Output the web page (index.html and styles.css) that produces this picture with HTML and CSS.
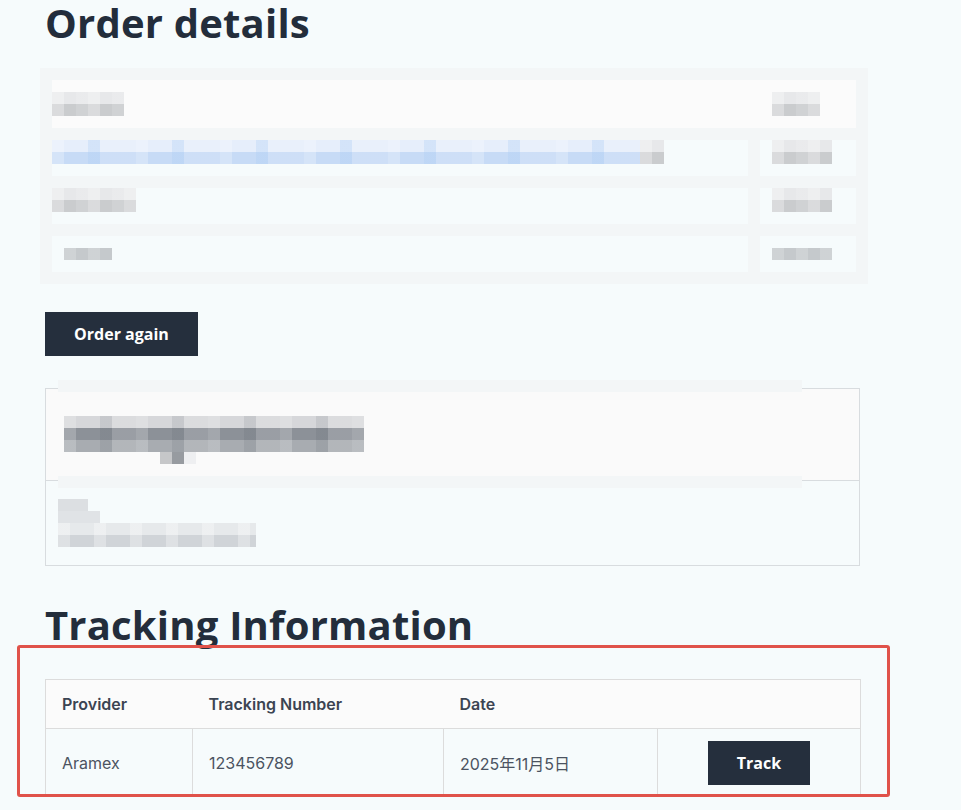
FILE: index.html
```html
<!DOCTYPE html>
<html lang="en">
<head>
<meta charset="utf-8">
<title>Order details</title>
<link rel="stylesheet" href="styles.css">
</head>
<body>
<main class="page">
  <h1 class="title title-order">Order details</h1>

  <div class="mosaic-table">
    <div class="mt-head">
      <span class="blk blk-gray w72"></span>
      <span class="blk blk-gray w48 blk-right"></span>
    </div>
    <div class="mt-cell"><span class="blk blk-blue w588"></span><span class="blk blk-gray w24"></span></div>
    <div class="mt-cell mt-cell-r"><span class="blk blk-gray w60"></span></div>
    <div class="mt-cell"><span class="blk blk-gray w84"></span></div>
    <div class="mt-cell mt-cell-r"><span class="blk blk-gray w60"></span></div>
    <div class="mt-cell mt-cell-mid"><span class="blk blk-mid w48 indent12"></span></div>
    <div class="mt-cell mt-cell-r mt-cell-mid"><span class="blk blk-mid w60"></span></div>
  </div>

  <button class="btn btn-order" type="button">Order again</button>

  <section class="address">
    <div class="address-head">
      <div class="address-veil"></div>
      <div class="addr-title"><span class="addr-desc"></span></div>
    </div>
    <div class="address-body">
      <div class="addr-line addr-line-short"></div>
      <div class="addr-line addr-line-mid"></div>
      <div class="addr-line addr-line-long"></div>
    </div>
  </section>

  <h2 class="title title-tracking">Tracking Information</h2>

  <div class="tracking-wrap">
    <table class="tracking">
      <thead>
        <tr>
          <th class="c1">Provider</th>
          <th class="c2">Tracking Number</th>
          <th class="c3">Date</th>
          <th class="c4"></th>
        </tr>
      </thead>
      <tbody>
        <tr>
          <td class="c1">Aramex</td>
          <td class="c2">123456789</td>
          <td class="c3">2025年11月5日</td>
          <td class="c4 cell-action"><button class="btn btn-track" type="button">Track</button></td>
        </tr>
      </tbody>
    </table>
    <div class="annotation"></div>
  </div>
</main>
</body>
</html>
```

FILE: styles.css
```css
html, body {
  margin: 0;
  padding: 0;
  background: #f6fbfc;
}

body {
  font-family: "Inter", "Noto Sans CJK JP", sans-serif;
  color: #3b4452;
}

.page {
  padding: 0 0 0 45px;
  width: 815px;
}

.title {
  font-family: "Open Sans", "Noto Sans", sans-serif;
  font-weight: 700;
  color: #232d3b;
  margin: 0;
  font-size: 40px;
  line-height: 46px;
  letter-spacing: 0.2px;
}

/* blurred order table */
.mosaic-table {
  margin: 22px 0 0 -5px;
  width: 828px;
  box-sizing: border-box;
  padding: 12px;
  background: #f3f6f7;
  display: grid;
  grid-template-columns: 696px 96px;
  column-gap: 12px;
  row-gap: 12px;
}

.mt-head {
  grid-column: 1 / span 2;
  height: 48px;
  box-sizing: border-box;
  padding: 12px 0;
  background: #fbfbfb;
  display: flex;
}

.mt-cell {
  height: 36px;
  background: #f6fbfc;
  display: flex;
  align-items: flex-start;
}

.mt-cell-r {
  padding-left: 12px;
}

.mt-cell-mid {
  align-items: center;
}

.indent12 {
  margin-left: 12px;
}

.blk {
  display: block;
  height: 24px;
}

.blk-right {
  margin-left: 648px;
}

.blk-gray {
  background:
    repeating-linear-gradient(90deg, rgba(255,255,255,0.3) 0 12px, rgba(255,255,255,0) 12px 24px, rgba(255,255,255,0.12) 24px 36px),
    linear-gradient(#e7e8ea 50%, #caccce 50%);
}

.blk-blue {
  background:
    repeating-linear-gradient(90deg, rgba(255,255,255,0.25) 0 12px, rgba(255,255,255,0) 12px 36px, rgba(170,204,244,0.3) 36px 48px, rgba(255,255,255,0.12) 48px 84px),
    linear-gradient(#e6eefb 50%, #c7dbf6 50%);
}

.blk-mid {
  height: 12px;
  background:
    repeating-linear-gradient(90deg, rgba(255,255,255,0.18) 0 12px, rgba(255,255,255,0) 12px 24px),
    #c5c9cc;
}

.w24 { width: 24px; }
.w48 { width: 48px; }
.w60 { width: 60px; }
.w72 { width: 72px; }
.w84 { width: 84px; }
.w588 { width: 588px; }

/* buttons */
.btn {
  border: 0;
  border-radius: 0;
  background: #252f3d;
  color: #ffffff;
  font-family: "Open Sans", "Noto Sans", sans-serif;
  font-weight: 700;
  font-size: 16px;
  cursor: pointer;
}

.btn-order {
  display: block;
  margin-top: 28px;
  width: 153px;
  height: 44px;
  padding: 0;
}

/* address */
.address {
  margin-top: 32px;
  border: 1px solid #d8dcdf;
}

.address-head {
  position: relative;
  height: 92px;
  background: #fafafa;
  border-bottom: 1px solid #d8dcdf;
  padding: 27px 0 0 18px;
  box-sizing: border-box;
}

.address-veil {
  position: absolute;
  left: 12px;
  right: 57px;
  top: -9px;
  bottom: -8px;
  border-top: 12px solid #f3f6f7;
  border-bottom: 12px solid #f3f6f7;
  background: #fafafa;
}

.addr-title {
  position: relative;
  width: 300px;
  height: 36px;
  background:
    repeating-linear-gradient(90deg, rgba(255,255,255,0.2) 0 12px, rgba(255,255,255,0) 12px 36px, rgba(60,70,80,0.1) 36px 48px, rgba(255,255,255,0.12) 48px 72px),
    linear-gradient(#d6d7da 33.3%, #8c9198 33.3% 66.6%, #a8acb1 66.6%);
}

.addr-desc {
  position: absolute;
  left: 96px;
  top: 36px;
  width: 36px;
  height: 12px;
  background: linear-gradient(90deg, #c6c7c9 0 12px, #979ba0 12px 24px, #eeeff1 24px);
}

.address-body {
  height: 84px;
  box-sizing: border-box;
  padding: 18px 0 0 12px;
}

.addr-line {
  height: 12px;
}

.addr-line-short {
  width: 30px;
  background: #dcdfe2;
}

.addr-line-mid {
  width: 42px;
  background: #e0e3e6;
}

.addr-line-long {
  width: 198px;
  height: 24px;
  background:
    repeating-linear-gradient(90deg, rgba(255,255,255,0.3) 0 12px, rgba(255,255,255,0) 12px 36px),
    linear-gradient(#e6e9eb 50%, #d0d4d8 50%);
}

/* tracking */
.title-tracking {
  margin-top: 36px;
}

.tracking-wrap {
  position: relative;
  margin-top: 31px;
}

.tracking {
  width: 815px;
  border-collapse: collapse;
  table-layout: fixed;
  border: 1px solid #dcdcdc;
  font-size: 16px;
}

.tracking th {
  background: #fbfbfb;
  font-weight: 600;
  color: #3b4452;
  text-align: left;
  height: 49px;
  padding: 0 0 0 16px;
  border-bottom: 1px solid #dcdcdc;
  box-sizing: border-box;
}

.tracking td {
  color: #4b5361;
  height: 68px;
  padding: 0 0 0 16px;
  border-left: 1px solid #dcdcdc;
  box-sizing: border-box;
  background: #f6fbfc;
}

.tracking td.c1 { border-left: 0; }

.tracking .c1 { width: 147px; }
.tracking .c2 { width: 251px; }
.tracking .c3 { width: 214px; }
.tracking .c4 { width: 203px; }

.tracking td.cell-action {
  padding: 0;
  text-align: center;
}

.btn-track {
  width: 102px;
  height: 44px;
  padding: 0;
}

.annotation {
  position: absolute;
  left: -28px;
  top: -34px;
  width: 873px;
  height: 152px;
  box-sizing: border-box;
  border: 3px solid #e0524a;
  border-radius: 3px;
  pointer-events: none;
}
```
